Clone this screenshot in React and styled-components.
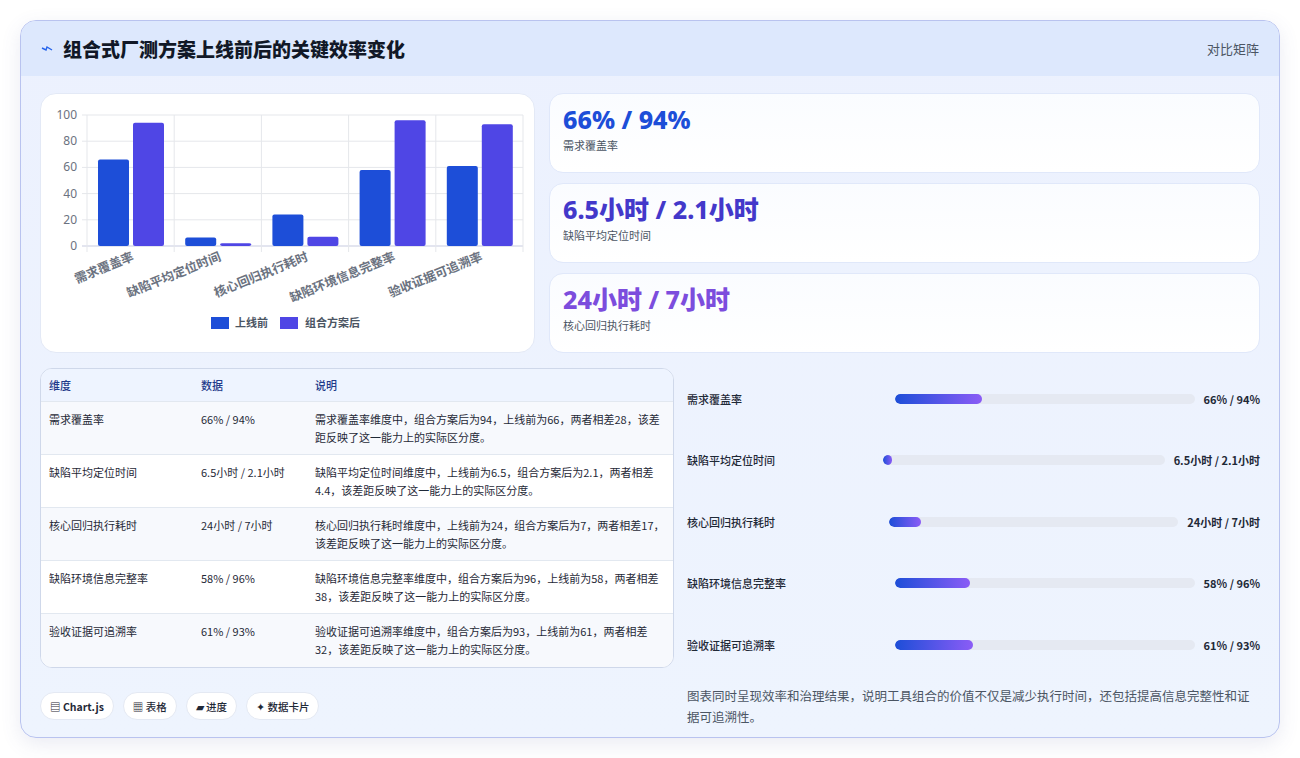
import React from "react";
import styled, { createGlobalStyle } from "styled-components";

const G = createGlobalStyle`
  html,body{margin:0;padding:0;background:#fff;}
  body{font-family:"Noto Sans CJK SC","Noto Sans",sans-serif;}
  *{box-sizing:border-box;}
`;
const Page = styled.div`padding:20px;height:758px;`;
const Frame = styled.div`
  height:718px;width:1260px;border:1px solid #b9c3ef;border-radius:16px;overflow:hidden;
  background:linear-gradient(180deg,#ecf1fe,#eef4fe);display:flex;flex-direction:column;
  box-shadow:0 6px 20px rgba(80,90,160,0.12);
`;
const Header = styled.div`
  height:55px;flex:none;background:#dde8fd;display:flex;align-items:center;justify-content:space-between;padding:0 20px;
`;
const Title = styled.h1`
  margin:0;font-size:19px;font-weight:800;color:#111827;display:flex;align-items:center;gap:10px;
`;
const Tag = styled.span`font-size:13px;color:#4b5563;`;
const Body = styled.div`padding:17px 19px 0 19px;display:flex;flex-direction:column;gap:15px;`;
const Grid = styled.div`display:grid;grid-template-columns:${p=>p.cols};column-gap:${p=>p.gap}px;`;
const ChartCard = styled.div`height:260px;background:#fff;border:1px solid #e3e9f6;border-radius:16px;`;
const Stats = styled.div`display:flex;flex-direction:column;gap:10px;`;
const Stat = styled.div`height:80px;background:linear-gradient(180deg,#fafcff,#fff);border:1px solid #e0e8fa;border-radius:14px;padding:9px 13px;`;
const StatVal = styled.div`font-size:25px;font-weight:800;color:${p=>p.c};line-height:32px;font-family:"Noto Sans","Noto Sans CJK SC",sans-serif;`;
const StatLbl = styled.div`font-size:11px;color:#4b5563;margin-top:2px;`;
const Table = styled.div`border:1px solid #cfd8ea;border-radius:12px;overflow:hidden;background:#fff;height:300px;`;
const Row = styled.div`
  display:grid;grid-template-columns:152px 114px 1fr;padding:0 8px;border-bottom:${p=>p.last?"none":"1px solid #e2e8f0"};
  background:${p=>p.head?"#eef4ff":p.alt?"#f7f9fd":"#fff"};height:${p=>p.head?"33px":"53px"};
  align-items:${p=>p.head?"center":"start"};padding-top:${p=>p.head?"0":"8px"};
  font-size:11px;line-height:18px;color:${p=>p.head?"#1e3a8a":"#1f2937"};font-weight:${p=>p.head?500:400};
`;
const Progress = styled.div`display:flex;flex-direction:column;padding-top:-0px;`;
const PRow = styled.div`display:flex;align-items:center;gap:9px;height:61.5px;font-size:11px;color:#1f2937;`;
const PLbl = styled.div`flex:2 1 0;font-weight:500;`;
const Track = styled.div`flex:3 1 0;height:10px;background:#e5e9f2;border-radius:5px;overflow:hidden;`;
const Fill = styled.div`height:100%;border-radius:5px;background:linear-gradient(90deg,#1d4ed8,#8b5cf6);min-width:9px;`;
const PVal = styled.div`font-weight:700;white-space:nowrap;`;
const Chips = styled.div`display:flex;gap:9px;padding-top:24px;`;
const Chip = styled.div`height:28px;border-radius:14px;background:#fff;border:1px solid #e4e9f3;padding:0 9px;display:flex;align-items:center;font-size:10.5px;color:#1f2937;font-weight:${p=>p.b?700:500};`;
const Note = styled.p`margin:0;padding-top:9px;font-size:12.5px;line-height:21px;color:#4b5563;`;

const cats=["需求覆盖率","缺陷平均定位时间","核心回归执行耗时","缺陷环境信息完整率","验收证据可追溯率"];
const pre=[66,6.5,24,58,61], post=[94,2.1,7,96,93];
const vals=["66% / 94%","6.5小时 / 2.1小时","24小时 / 7小时","58% / 96%","61% / 93%"];
const desc=["需求覆盖率维度中，组合方案后为94，上线前为66，两者相差28，该差距反映了这一能力上的实际区分度。",
"缺陷平均定位时间维度中，上线前为6.5，组合方案后为2.1，两者相差4.4，该差距反映了这一能力上的实际区分度。",
"核心回归执行耗时维度中，上线前为24，组合方案后为7，两者相差17，该差距反映了这一能力上的实际区分度。",
"缺陷环境信息完整率维度中，组合方案后为96，上线前为58，两者相差38，该差距反映了这一能力上的实际区分度。",
"验收证据可追溯率维度中，组合方案后为93，上线前为61，两者相差32，该差距反映了这一能力上的实际区分度。"];
const fills=[29,1,11,25,26];

function Chart(){
  const x0=46,x1=482,y0=21,y1=152,cw=(x1-x0)/5;
  const y=v=>y1-(v/100)*(y1-y0);
  return <svg width="495" height="260" style={{display:"block"}}>
    {[0,20,40,60,80,100].map(v=><g key={v}>
      <line x1={x0-5} x2={x1} y1={y(v)} y2={y(v)} stroke={v===0?"#c7cbe0":"#e5e7eb"}/>
      <text x={x0-10} y={y(v)+4} textAnchor="end" fontSize="12" fill="#6b7280" fontFamily="Noto Sans">{v}</text>
    </g>)}
    {[0,1,2,3,4,5].map(i=><line key={i} x1={x0+i*cw} x2={x0+i*cw} y1={y0} y2={y1+6} stroke="#e5e7eb"/>)}
    {cats.map((c,i)=>{const bx=x0+i*cw+11;return <g key={c}>
      <rect x={bx} y={y(pre[i])} width="31" height={y1-y(pre[i])} rx="2" fill="#1d4ed8"/>
      <rect x={bx+35} y={y(post[i])} width="31" height={y1-y(post[i])} rx="2" fill="#4f46e5"/>
      <text transform={`translate(${x0+i*cw+cw/2+4},${y1+14}) rotate(-22)`} textAnchor="end" fontSize="12.5" fontWeight="700" fill="#6b7280">{c}</text>
    </g>})}
    <rect x="170" y="223" width="18" height="12" fill="#1d4ed8"/>
    <text x="194" y="233" fontSize="11" fill="#4b5563" fontWeight="700">上线前</text>
    <rect x="239" y="223" width="18" height="12" fill="#4f46e5"/>
    <text x="264" y="233" fontSize="11" fill="#4b5563" fontWeight="700">组合方案后</text>
  </svg>;
}

export default function App(){
  return <Page><G/><Frame>
    <Header>
      <Title><svg width="12" height="10" viewBox="0 0 12 10"><path d="M1 4 L5 6 L6 3 L11 6" stroke="#2563eb" strokeWidth="1.4" fill="none"/></svg>组合式厂测方案上线前后的关键效率变化</Title>
      <Tag>对比矩阵</Tag>
    </Header>
    <Body>
      <Grid cols="495px 1fr" gap={14}>
        <ChartCard><Chart/></ChartCard>
        <Stats>
          <Stat><StatVal c="#1d4ed8">66% / 94%</StatVal><StatLbl>需求覆盖率</StatLbl></Stat>
          <Stat><StatVal c="#4338ca">6.5小时 / 2.1小时</StatVal><StatLbl>缺陷平均定位时间</StatLbl></Stat>
          <Stat><StatVal c="#7c4ddd">24小时 / 7小时</StatVal><StatLbl>核心回归执行耗时</StatLbl></Stat>
        </Stats>
      </Grid>
      <Grid cols="634px 1fr" gap={13}>
        <div>
          <Table>
            <Row head><span>维度</span><span>数据</span><span>说明</span></Row>
            {cats.map((c,i)=><Row key={c} alt={i%2===0} last={i===4}><span>{c}</span><span>{vals[i]}</span><span>{desc[i]}</span></Row>)}
          </Table>
          <Chips>
            <Chip b>▤ Chart.js</Chip><Chip>▦ 表格</Chip><Chip>▰ 进度</Chip><Chip>✦ 数据卡片</Chip>
          </Chips>
        </div>
        <div>
          <Progress>
            {cats.map((c,i)=><PRow key={c}><PLbl>{c}</PLbl><Track><Fill style={{width:fills[i]+"%"}}/></Track><PVal>{vals[i]}</PVal></PRow>)}
          </Progress>
          <Note>图表同时呈现效率和治理结果，说明工具组合的价值不仅是减少执行时间，还包括提高信息完整性和证据可追溯性。</Note>
        </div>
      </Grid>
    </Body>
  </Frame></Page>;
}
